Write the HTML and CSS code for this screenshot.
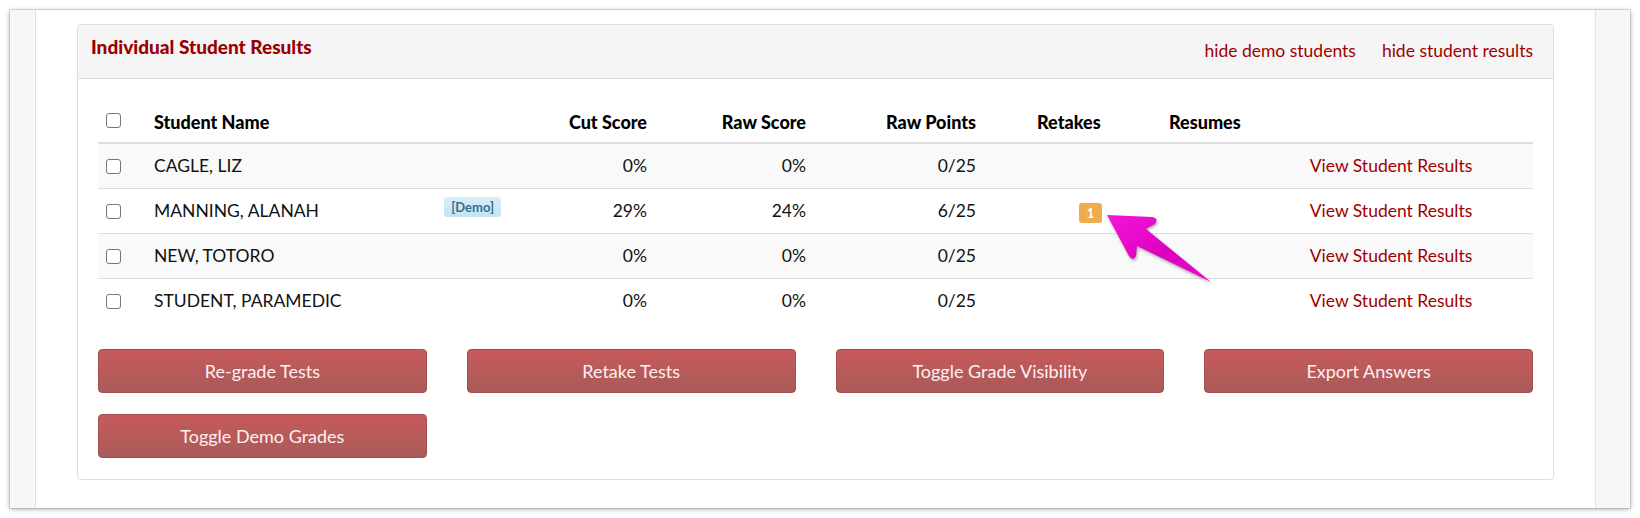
FILE: index.html
```html
<!DOCTYPE html>
<html lang="en">
<head>
  <meta charset="UTF-8">
  <meta name="viewport" content="width=device-width, initial-scale=1.0">
  <title>Individual Student Results</title>
  <link rel="stylesheet" href="styles.css">
</head>
<body>
  <div class="window">
    <div class="side side-left"></div>

    <main class="content">
      <section class="panel">
        <div class="panel-heading">
          <h3>Individual Student Results</h3>
          <div class="panel-links">
            <a href="#">hide demo students</a>
            <a href="#">hide student results</a>
          </div>
        </div>

        <div class="panel-body">
          <table class="results">
            <colgroup>
              <col class="col-check">
              <col class="col-name">
              <col class="col-cut">
              <col class="col-raw">
              <col class="col-points">
              <col class="col-retakes">
              <col class="col-resumes">
              <col>
            </colgroup>
            <thead>
              <tr>
                <th><input type="checkbox" class="check"></th>
                <th>Student Name</th>
                <th class="num">Cut Score</th>
                <th class="num">Raw Score</th>
                <th class="num">Raw Points</th>
                <th class="retakes">Retakes</th>
                <th>Resumes</th>
                <th></th>
              </tr>
            </thead>
            <tbody>
              <tr>
                <td><input type="checkbox" class="check"></td>
                <td>CAGLE, LIZ</td>
                <td class="num">0%</td>
                <td class="num">0%</td>
                <td class="num">0/25</td>
                <td class="retakes"></td>
                <td></td>
                <td class="view"><a href="#">View Student Results</a></td>
              </tr>
              <tr>
                <td><input type="checkbox" class="check"></td>
                <td>MANNING, ALANAH <span class="demo">[Demo]</span></td>
                <td class="num">29%</td>
                <td class="num">24%</td>
                <td class="num">6/25</td>
                <td class="retakes"><span class="count">1</span></td>
                <td></td>
                <td class="view"><a href="#">View Student Results</a></td>
              </tr>
              <tr>
                <td><input type="checkbox" class="check"></td>
                <td>NEW, TOTORO</td>
                <td class="num">0%</td>
                <td class="num">0%</td>
                <td class="num">0/25</td>
                <td class="retakes"></td>
                <td></td>
                <td class="view"><a href="#">View Student Results</a></td>
              </tr>
              <tr>
                <td><input type="checkbox" class="check"></td>
                <td>STUDENT, PARAMEDIC</td>
                <td class="num">0%</td>
                <td class="num">0%</td>
                <td class="num">0/25</td>
                <td class="retakes"></td>
                <td></td>
                <td class="view"><a href="#">View Student Results</a></td>
              </tr>
            </tbody>
          </table>

          <div class="actions">
            <button class="btn">Re-grade Tests</button>
            <button class="btn">Retake Tests</button>
            <button class="btn">Toggle Grade Visibility</button>
            <button class="btn">Export Answers</button>
            <button class="btn">Toggle Demo Grades</button>
          </div>
        </div>
      </section>
    </main>

    <div class="side side-right"></div>

    <svg class="pointer" width="125" height="85" viewBox="0 0 125 85">
      <defs>
        <linearGradient id="pink" x1="0" y1="0" x2="1" y2="1">
          <stop offset="0" stop-color="#f616da"/>
          <stop offset="0.55" stop-color="#dc02bd"/>
          <stop offset="1" stop-color="#e80ccb"/>
        </linearGradient>
      </defs>
      <path d="M12,10 L57,12 Q64,13 60,19 L51,24 L116,77 L42,41 L41,51 Q38,57 34,51 Z" fill="url(#pink)"/>
    </svg>
  </div>
</body>
</html>
```

FILE: styles.css
```css
* {
  box-sizing: border-box;
}
body {
  margin: 0;
  background: #fff;
  font-family: 'Lato', sans-serif;
  font-size: 17.5px;
  color: #111;
}
a {
  color: #a00000;
  text-decoration: none;
}
.window {
  position: relative;
  display: flex;
  margin: 10px;
  height: 498px;
  background: #fff;
  overflow: hidden;
  box-shadow: 0 0 0 1px rgba(0, 0, 0, 0.1), 0 1px 5px rgba(0, 0, 0, 0.35);
}
.side {
  background: #f7f7f7;
}
.side-left {
  width: 26px;
  border-right: 1px solid #e2e2e2;
}
.side-right {
  width: 35px;
  border-left: 1px solid #e2e2e2;
}
.content {
  flex: 1;
  padding: 14px 41px 0;
}
.panel {
  border: 1px solid #ddd;
  border-radius: 4px;
  background: #fff;
}
.panel-heading {
  display: flex;
  justify-content: space-between;
  align-items: flex-start;
  height: 54px;
  padding: 0 20px 0 13px;
  background: #f5f5f5;
  border-bottom: 1px solid #ddd;
  border-radius: 4px 4px 0 0;
}
.panel-heading h3 {
  margin: 0;
  padding-top: 10px;
  font-size: 19px;
  line-height: 24px;
  font-weight: 900;
  color: #990000;
}
.panel-links {
  display: flex;
  gap: 26px;
  padding-top: 14px;
  line-height: 24px;
}
.panel-body {
  padding: 19px 20px 21px;
}

.results {
  width: 100%;
  border-collapse: collapse;
  table-layout: fixed;
  margin-bottom: 26px;
}
.col-check { width: 48px; }
.col-name { width: 363px; }
.col-cut { width: 146px; }
.col-raw { width: 159px; }
.col-points { width: 170px; }
.col-retakes { width: 177px; }
.col-resumes { width: 88px; }
.results th,
.results td {
  padding: 8px;
  line-height: 28px;
  text-align: left;
  white-space: nowrap;
}
.results th {
  padding: 10px 8px 6px;
  vertical-align: bottom;
  font-size: 18px;
  font-weight: 900;
  color: #000;
  border-bottom: 2px solid #ddd;
}
.results td {
  vertical-align: middle;
  border-top: 1px solid #ddd;
}
.results tbody tr:nth-child(odd) {
  background: #f9f9f9;
}
.results .num {
  text-align: right;
}
.results th.retakes {
  padding-left: 53px;
}
.results td.retakes {
  padding-left: 95px;
}
.results td.view {
  text-align: center;
}
.check {
  appearance: none;
  display: inline-block;
  width: 15px;
  height: 15px;
  margin: 0;
  vertical-align: -2px;
  border: 1px solid #777;
  border-radius: 3px;
  background: #fff;
}
.results th .check {
  vertical-align: 1px;
}
.demo {
  float: right;
  height: 20px;
  padding: 0 7px;
  border-radius: 3px;
  background: linear-gradient(#d9edf7, #c4e3f3);
  color: #31708f;
  font-size: 13px;
  font-weight: bold;
  line-height: 20px;
}
.count {
  display: inline-block;
  width: 23px;
  height: 20px;
  border-radius: 3px;
  background: #f0ad4e;
  color: #fff;
  font-size: 13px;
  font-weight: bold;
  line-height: 20px;
  text-align: center;
  vertical-align: middle;
}

.actions {
  display: grid;
  grid-template-columns: repeat(4, 1fr);
  gap: 21px 40px;
}
.btn {
  height: 44px;
  padding: 0;
  border: 1px solid #a34f4f;
  border-radius: 4px;
  background: linear-gradient(#c85a5a, #a95a5a);
  color: #fbf1f1;
  font-family: 'Lato', sans-serif;
  font-size: 18px;
}

.pointer {
  position: absolute;
  left: 1085px;
  top: 195px;
  filter: drop-shadow(1px 2px 1.5px rgba(0, 0, 0, 0.3));
}
```
